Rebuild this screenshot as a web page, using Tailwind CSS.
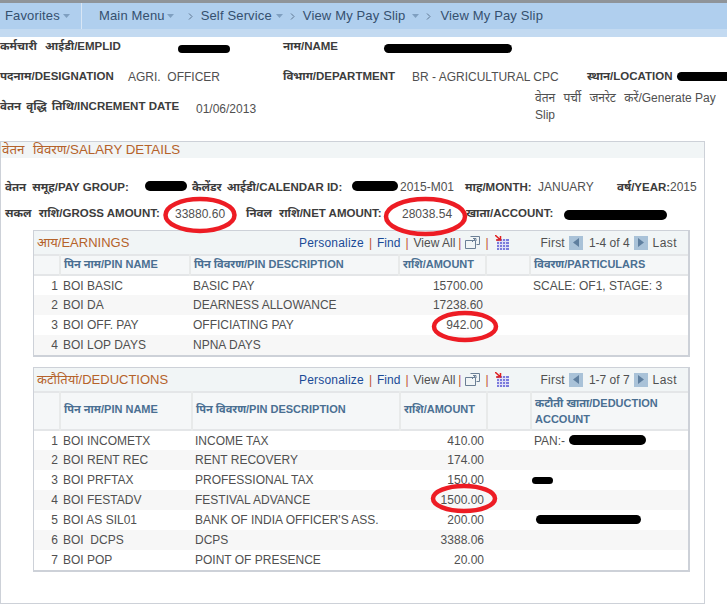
<!doctype html>
<html>
<head>
<meta charset="utf-8">
<script src="https://cdn.jsdelivr.net/npm/@tailwindcss/browser@4"></script>
</head>
<body class="relative h-[615px] w-[727px] overflow-hidden bg-white font-['Liberation_Sans','Noto_Sans',sans-serif] text-[12px] text-[#505050]">

<!-- nav -->
<div class="h-[37px] border-t-[3px] border-[#8f9499] bg-[#c3daf1]">
  <div class="flex h-[26px] items-center bg-[#b0cfee] text-[13px] tracking-[0.15px] text-[#35506e]">
    <div class="flex h-full w-[82px] items-center border-r border-[#d8e6f5] pl-[5px]">Favorites<svg class="ml-[3px]" width="8" height="4"><path d="M0 0h7L3.500 4z" fill="#7f9fc0"/></svg></div>
    <span class="ml-[17px]">Main Menu</span><svg class="ml-[2px]" width="8" height="4"><path d="M0 0h7L3.500 4z" fill="#7f9fc0"/></svg>
    <svg class="ml-[13px]" width="5" height="7"><path d="M1 .500 4 3.500 1 6.500" fill="none" stroke="#5f7690"/></svg>
    <span class="ml-[8px]">Self Service</span><svg class="ml-[4px]" width="8" height="4"><path d="M0 0h7L3.500 4z" fill="#7f9fc0"/></svg>
    <svg class="ml-[6px]" width="5" height="7"><path d="M1 .500 4 3.500 1 6.500" fill="none" stroke="#5f7690"/></svg>
    <span class="ml-[8px]">View My Pay Slip</span><svg class="ml-[7px]" width="8" height="4"><path d="M0 0h7L3.500 4z" fill="#7f9fc0"/></svg>
    <svg class="ml-[6px]" width="5" height="7"><path d="M1 .500 4 3.500 1 6.500" fill="none" stroke="#5f7690"/></svg>
    <span class="ml-[9px]">View My Pay Slip</span>
  </div>
</div>

<!-- employee info -->
<div class="h-[104px] text-[11.5px]">
  <div class="flex h-[20px] items-center">
    <b class="w-[283px] text-[#3c3c3c] [word-spacing:5px]">कर्मचारी आईडी/EMPLID</b>
    <b class="text-[#3c3c3c]">नाम/NAME</b>
  </div>
  <div class="flex h-[39px] items-center">
    <b class="w-[128px] text-[#3c3c3c]">पदनाम/DESIGNATION</b>
    <span class="w-[155px] text-[12px]">AGRI.&nbsp; OFFICER</span>
    <b class="w-[129px] whitespace-nowrap text-[#3c3c3c]">विभाग/DEPARTMENT</b>
    <span class="w-[175px] whitespace-nowrap text-[12px]">BR - AGRICULTURAL CPC</span>
    <b class="whitespace-nowrap text-[#3c3c3c]">स्थान/LOCATION</b>
  </div>
  <div class="flex h-[36px] items-start">
    <b class="mt-[2px] w-[196px] text-[#3c3c3c]"><span class="[word-spacing:2px]">वेतन वृद्धि तिथि</span>/INCREMENT DATE</b>
    <span class="mt-[4px] w-[339px] text-[12px]">01/06/2013</span>
    <div class="-mt-[6px] w-[188px] text-[12px] leading-[17px]">
      <div class="whitespace-nowrap"><span class="[word-spacing:5px]">वेतन पर्ची जनरेट करें</span>/Generate Pay</div>
      <div>Slip</div>
    </div>
  </div>
</div>

<!-- salary box -->
<div class="h-[463px] w-[705px] border border-[#cdd1d8]">
  <div class="h-[16px] bg-[#f1f5f6] pl-[1px] text-[13.300px] leading-[16px] text-[#b5622a]"><span class="[word-spacing:5px]">वेतन विवरण</span>/SALARY DETAILS</div>

  <div class="flex h-[37px] items-baseline pl-[4px] pt-[20px] text-[11.5px]">
    <b class="w-[140px] whitespace-nowrap text-[#3c3c3c]"><span class="[word-spacing:3px]">वेतन समूह</span>/PAY GROUP:</b>
    <b class="w-[207px] whitespace-nowrap pl-[47px] text-[#3c3c3c]"><span class="[word-spacing:2px]">कैलेंडर आईडी</span>/CALENDAR ID:</b>
    <span class="ml-[48px] w-[65px] text-[12px]">2015-M01</span>
    <b class="w-[73px] whitespace-nowrap text-[#3c3c3c]">माह/MONTH:</b>
    <span class="w-[79px] text-[12px]">JANUARY</span>
    <b class="w-[53px] whitespace-nowrap text-[#3c3c3c]">वर्ष/YEAR:</b>
    <span class="text-[12px]">2015</span>
  </div>
  <div class="flex h-[29px] items-center pl-[4px] pt-[9px] text-[11.5px]">
    <b class="w-[170px] whitespace-nowrap text-[#3c3c3c]"><span class="[word-spacing:4px]">सकल राशि</span>/GROSS AMOUNT:</b>
    <span class="w-[71px] text-[12px]">33880.60</span>
    <b class="w-[155px] whitespace-nowrap text-[#3c3c3c]"><span class="[word-spacing:4px]">निवल राशि</span>/NET AMOUNT:</b>
    <span class="w-[65px] pl-[1px] text-[12px]">28038.54</span>
    <b class="whitespace-nowrap text-[#3c3c3c]">खाता/ACCOUNT:</b>
  </div>

  <!-- earnings -->
  <div class="ml-[32px] mt-[6px] w-[657px] border-2 border-t border-l border-[#cdd1d8]">
    <div class="flex h-[23px] items-center bg-[#f1f5f6]">
      <span class="ml-[3px] w-[262px] text-[13px] text-[#b5622a]">आय/EARNINGS</span>
      <span class="tracking-[0.2px] text-[#1a4a96]">Personalize</span>
      <span class="mx-[5px] text-[#c05030]">|</span><span class="text-[#1a4a96]">Find</span>
      <span class="mx-[5px] text-[#c05030]">|</span><span>View All</span>
      <span class="ml-[3px] mr-[4px] text-[#c05030]">|</span>
      <svg width="15" height="13" viewBox="0 0 15 13"><path d="M5.500 .500h9v8h-3M.500 4.500h10v8H.500z" fill="none" stroke="#6b7f95"/><path d="M7 6l3.500-3.500M8 2.500h3V5" fill="none" stroke="#6b7f95"/></svg>
      <span class="ml-[5px] mr-[6px] text-[#c05030]">|</span>
      <svg width="14" height="15" viewBox="0 0 14 15"><path d="M2 4h12v11H2z" fill="#7b7bdc"/><path d="M2 6.500h12M2 9.500h12M2 12.500h12M4.500 4v11M7.500 4v11M10.500 4v11" stroke="#e0e0f6"/><path d="M0 0l5 4.500M5.500 1v4H1" fill="none" stroke="#e02020" stroke-width="1.500"/></svg>
      <span class="ml-[32px] tracking-[0.2px]">First</span>
      <span class="ml-[4px] flex h-[14px] w-[14px] items-center justify-center bg-[#a9c2d8]"><svg width="6" height="9"><path d="M6 0v9L0 4.500z" fill="#5f7f9f"/></svg></span>
      <span class="ml-[6px]">1-4 of 4</span>
      <span class="ml-[4px] flex h-[14px] w-[14px] items-center justify-center bg-[#a9c2d8]"><svg width="6" height="9"><path d="M0 0v9l6-4.500z" fill="#5f7f9f"/></svg></span>
      <span class="ml-[5px] tracking-[0.4px]">Last</span>
    </div>
    <table class="w-full table-fixed border-collapse">
      <colgroup><col class="w-[26px]"><col class="w-[130px]"><col class="w-[209px]"><col class="w-[87px]"><col class="w-[44px]"><col></colgroup>
      <thead class="bg-[#f5f7f8] text-left text-[11px] text-[#4a6f92]">
        <tr class="h-[20px] border-y-2 border-[#e4e6e8]">
          <th class="border-r-2 border-[#e8eaea]"></th>
          <th class="border-r-2 border-[#e8eaea] pb-[1px] pl-[3px] font-bold">पिन नाम/PIN NAME</th>
          <th class="border-r-2 border-[#e8eaea] pb-[1px] pl-[3px] font-bold">पिन विवरण/PIN DESCRIPTION</th>
          <th class="border-r-2 border-[#e8eaea] pb-[1px] pl-[3px] font-bold">राशि/AMOUNT</th>
          <th class="border-r-2 border-[#e8eaea]"></th>
          <th class="pb-[1px] pl-[3px] font-bold">विवरण/PARTICULARS</th>
        </tr>
      </thead>
      <tbody class="[&amp;_td]:border-b [&amp;_td]:border-r-2 [&amp;_td]:border-[#e8eaea]">
        <tr class="h-[20px]"><td class="pr-[2px] text-right">1</td><td class="pl-[3px]">BOI BASIC</td><td class="pl-[3px]">BASIC PAY</td><td class="pr-[3px] text-right">15700.00</td><td></td><td class="pl-[3px]">SCALE: OF1, STAGE: 3</td></tr>
        <tr class="h-[20px] bg-[#f7f7f7]"><td class="pr-[2px] text-right">2</td><td class="pl-[3px]">BOI DA</td><td class="pl-[3px]">DEARNESS ALLOWANCE</td><td class="pr-[3px] text-right">17238.60</td><td></td><td></td></tr>
        <tr class="h-[20px]"><td class="pr-[2px] text-right">3</td><td class="pl-[3px]">BOI OFF. PAY</td><td class="pl-[3px]">OFFICIATING PAY</td><td class="pr-[3px] text-right">942.00</td><td></td><td></td></tr>
        <tr class="h-[20px] bg-[#f7f7f7]"><td class="pr-[2px] text-right">4</td><td class="pl-[3px]">BOI LOP DAYS</td><td class="pl-[3px]">NPNA DAYS</td><td></td><td></td><td></td></tr>
      </tbody>
    </table>
  </div>

  <!-- deductions -->
  <div class="ml-[32px] mt-[10px] w-[657px] border-2 border-t border-l border-[#cdd1d8]">
    <div class="flex h-[23px] items-center bg-[#f1f5f6]">
      <span class="ml-[3px] w-[262px] text-[13px] text-[#b5622a]">कटौतियां/DEDUCTIONS</span>
      <span class="tracking-[0.2px] text-[#1a4a96]">Personalize</span>
      <span class="mx-[5px] text-[#c05030]">|</span><span class="text-[#1a4a96]">Find</span>
      <span class="mx-[5px] text-[#c05030]">|</span><span>View All</span>
      <span class="ml-[3px] mr-[4px] text-[#c05030]">|</span>
      <svg width="15" height="13" viewBox="0 0 15 13"><path d="M5.500 .500h9v8h-3M.500 4.500h10v8H.500z" fill="none" stroke="#6b7f95"/><path d="M7 6l3.500-3.500M8 2.500h3V5" fill="none" stroke="#6b7f95"/></svg>
      <span class="ml-[5px] mr-[6px] text-[#c05030]">|</span>
      <svg width="14" height="15" viewBox="0 0 14 15"><path d="M2 4h12v11H2z" fill="#7b7bdc"/><path d="M2 6.500h12M2 9.500h12M2 12.500h12M4.500 4v11M7.500 4v11M10.500 4v11" stroke="#e0e0f6"/><path d="M0 0l5 4.500M5.500 1v4H1" fill="none" stroke="#e02020" stroke-width="1.500"/></svg>
      <span class="ml-[32px] tracking-[0.2px]">First</span>
      <span class="ml-[4px] flex h-[14px] w-[14px] items-center justify-center bg-[#a9c2d8]"><svg width="6" height="9"><path d="M6 0v9L0 4.500z" fill="#5f7f9f"/></svg></span>
      <span class="ml-[6px]">1-7 of 7</span>
      <span class="ml-[4px] flex h-[14px] w-[14px] items-center justify-center bg-[#a9c2d8]"><svg width="6" height="9"><path d="M0 0v9l6-4.500z" fill="#5f7f9f"/></svg></span>
      <span class="ml-[5px] tracking-[0.4px]">Last</span>
    </div>
    <table class="w-full table-fixed border-collapse">
      <colgroup><col class="w-[26px]"><col class="w-[132px]"><col class="w-[208px]"><col class="w-[87px]"><col class="w-[44px]"><col></colgroup>
      <thead class="bg-[#f5f7f8] text-left text-[11px] text-[#4a6f92]">
        <tr class="h-[38px] border-y-2 border-[#e4e6e8]">
          <th class="border-r-2 border-[#e8eaea]"></th>
          <th class="border-r-2 border-[#e8eaea] pb-[3px] pl-[3px] font-bold">पिन नाम/PIN NAME</th>
          <th class="border-r-2 border-[#e8eaea] pb-[3px] pl-[3px] font-bold">पिन विवरण/PIN DESCRIPTION</th>
          <th class="border-r-2 border-[#e8eaea] pb-[3px] pl-[3px] font-bold">राशि/AMOUNT</th>
          <th class="border-r-2 border-[#e8eaea]"></th>
          <th class="pl-[3px] font-bold leading-[16px]">कटौती खाता/DEDUCTION ACCOUNT</th>
        </tr>
      </thead>
      <tbody class="[&amp;_td]:border-b [&amp;_td]:border-r-2 [&amp;_td]:border-[#e8eaea]">
        <tr class="h-[20px]"><td class="pr-[2px] text-right">1</td><td class="pl-[3px]">BOI INCOMETX</td><td class="pl-[3px]">INCOME TAX</td><td class="pr-[3px] text-right">410.00</td><td></td><td class="pl-[3px]">PAN:-</td></tr>
        <tr class="h-[20px] bg-[#f7f7f7]"><td class="pr-[2px] text-right">2</td><td class="pl-[3px]">BOI RENT REC</td><td class="pl-[3px]">RENT RECOVERY</td><td class="pr-[3px] text-right">174.00</td><td></td><td></td></tr>
        <tr class="h-[20px]"><td class="pr-[2px] text-right">3</td><td class="pl-[3px]">BOI PRFTAX</td><td class="pl-[3px]">PROFESSIONAL TAX</td><td class="pr-[3px] text-right">150.00</td><td></td><td></td></tr>
        <tr class="h-[20px] bg-[#f7f7f7]"><td class="pr-[2px] text-right">4</td><td class="pl-[3px]">BOI FESTADV</td><td class="pl-[3px]">FESTIVAL ADVANCE</td><td class="pr-[3px] text-right">1500.00</td><td></td><td></td></tr>
        <tr class="h-[20px]"><td class="pr-[2px] text-right">5</td><td class="pl-[3px]">BOI AS SIL01</td><td class="pl-[3px]">BANK OF INDIA OFFICER'S ASS.</td><td class="pr-[3px] text-right">200.00</td><td></td><td></td></tr>
        <tr class="h-[20px] bg-[#f7f7f7]"><td class="pr-[2px] text-right">6</td><td class="whitespace-pre pl-[3px]">BOI  DCPS</td><td class="pl-[3px]">DCPS</td><td class="pr-[3px] text-right">3388.06</td><td></td><td></td></tr>
        <tr class="h-[20px]"><td class="pr-[2px] text-right">7</td><td class="pl-[3px]">BOI POP</td><td class="pl-[3px]">POINT OF PRESENCE</td><td class="pr-[3px] text-right">20.00</td><td></td><td></td></tr>
      </tbody>
    </table>
  </div>
</div>

<!-- redaction scribbles and red circles drawn on top of the screenshot -->
<svg class="absolute left-0 top-0" width="727" height="615" fill="none">
  <g fill="#000">
    <rect x="178" y="45" width="52" height="8" rx="4"/>
    <rect x="384" y="44" width="128" height="9" rx="4.500"/>
    <rect x="677" y="72" width="60" height="9" rx="4.500"/>
    <rect x="145" y="181" width="42" height="10" rx="5"/>
    <rect x="352" y="181" width="46" height="10" rx="5"/>
    <rect x="564" y="210" width="103" height="10" rx="5"/>
    <rect x="569" y="435" width="77" height="10" rx="5"/>
    <rect x="532" y="477" width="21" height="7" rx="3.500"/>
    <rect x="536" y="515" width="105" height="9" rx="4.500"/>
  </g>
  <g stroke="#ed1c24" stroke-width="4.500">
    <ellipse cx="200" cy="215" rx="34.500" ry="16"/>
    <ellipse cx="425.500" cy="216.500" rx="39.500" ry="17.500"/>
    <ellipse cx="465" cy="326.500" rx="31" ry="13.500"/>
    <ellipse cx="464" cy="498.500" rx="31" ry="12.500"/>
  </g>
</svg>
</body>
</html>
